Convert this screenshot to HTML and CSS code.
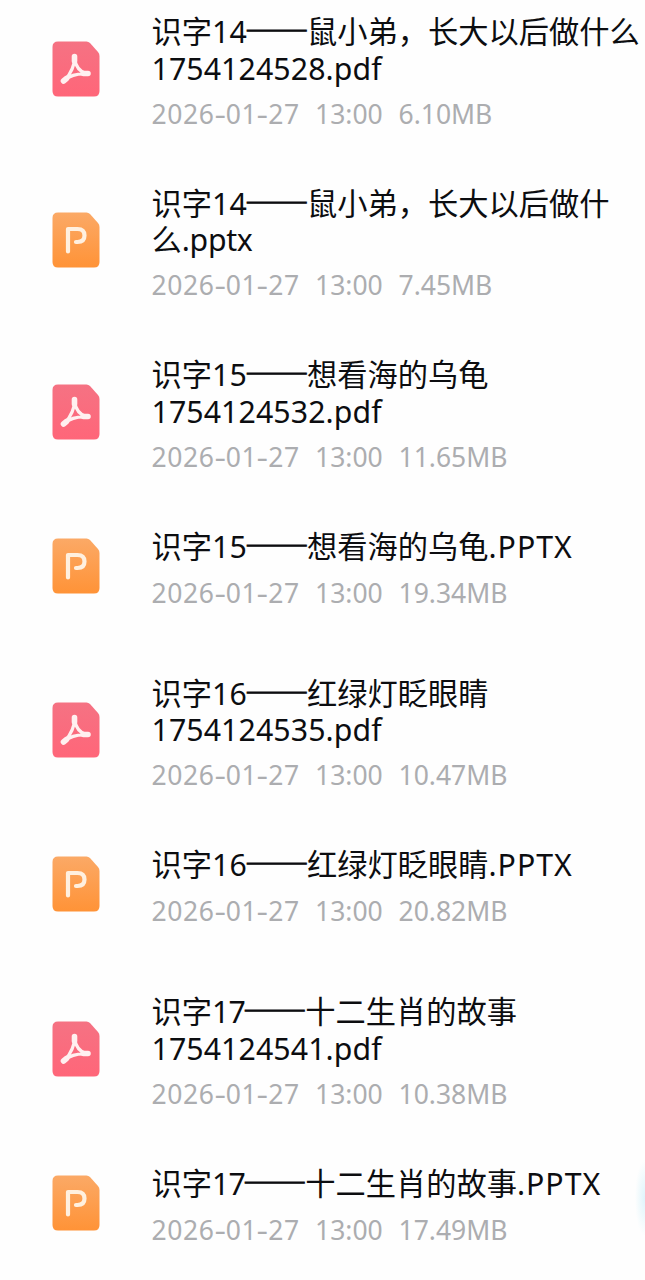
FILE: index.html
```
<!DOCTYPE html>
<html lang="zh-CN">
<head>
<meta charset="utf-8">
<title>文件列表</title>
<link rel="stylesheet" href="styles.css">
</head>
<body>
<svg class="defs" width="0" height="0" aria-hidden="true">
  <defs>
    <linearGradient id="red" x1="0" y1="0" x2="0" y2="1"><stop offset="0" stop-color="#f57283"/><stop offset="1" stop-color="#ff6679"/></linearGradient>
    <linearGradient id="orange" x1="0" y1="0" x2="0" y2="1"><stop offset="0" stop-color="#fba966"/><stop offset="1" stop-color="#ff9337"/></linearGradient>
    <symbol id="pdf" viewBox="0 0 48 56">
      <path fill="url(#red)" d="M6 .5H34.5Q36.5 .5 38 2L46 11Q47.500 12.700 47.500 15V50Q47.500 55.500 42 55.500H6Q.5 55.500 .5 50V6Q.5 .5 6 .5Z"/>
      <path fill="none" stroke="#fff0f0" stroke-width="3.200" stroke-linejoin="round" d="M22.500 17C22.500 24 19 32 13 39C18 34.500 26 32.500 35 33C28 31 23.500 25 22.500 17Z"/>
      <path fill="none" stroke="#fff0f0" stroke-width="5.600" stroke-linecap="round" d="M22.500 15.500V20M11.500 40L14.500 37.500M31.500 32.500H36"/>
    </symbol>
    <symbol id="ppt" viewBox="0 0 48 56">
      <path fill="url(#orange)" d="M6 .5H34.5Q36.500 .5 38 2L46 11Q47.500 12.700 47.500 15V50Q47.500 55.500 42 55.500H6Q.5 55.500 .5 50V6Q.5 .5 6 .5Z"/>
      <path fill="none" stroke="#fff0df" stroke-width="4.200" stroke-linecap="round" stroke-linejoin="round" d="M16 39.500V17H25.500Q32.500 17 32.500 23.500T25.500 30H24"/>
    </symbol>
  </defs>
</svg>
<main class="list">
  <article class="row"><svg class="icon"><use href="#pdf"/></svg><div class="info"><div class="name">识字<span class="num">14</span><span class="dash">——</span>鼠小弟，长大以后做什么<br><span class="num">1754124528.pdf</span></div><div class="meta"><span class="date">2026<i>-</i>01<i>-</i>27</span><span class="time">13:00</span><span>6.10MB</span></div></div></article>
  <article class="row"><svg class="icon"><use href="#ppt"/></svg><div class="info"><div class="name">识字<span class="num">14</span><span class="dash">——</span>鼠小弟，长大以后做什<br>么<span class="num ext">.pptx</span></div><div class="meta"><span class="date">2026<i>-</i>01<i>-</i>27</span><span class="time">13:00</span><span>7.45MB</span></div></div></article>
  <article class="row"><svg class="icon"><use href="#pdf"/></svg><div class="info"><div class="name">识字<span class="num">15</span><span class="dash">——</span>想看海的乌龟<br><span class="num">1754124532.pdf</span></div><div class="meta"><span class="date">2026<i>-</i>01<i>-</i>27</span><span class="time">13:00</span><span>11.65MB</span></div></div></article>
  <article class="row single"><svg class="icon"><use href="#ppt"/></svg><div class="info"><div class="name">识字<span class="num">15</span><span class="dash">——</span>想看海的乌龟<span class="num caps">.PPTX</span></div><div class="meta"><span class="date">2026<i>-</i>01<i>-</i>27</span><span class="time">13:00</span><span>19.34MB</span></div></div></article>
  <article class="row"><svg class="icon"><use href="#pdf"/></svg><div class="info"><div class="name">识字<span class="num">16</span><span class="dash">——</span>红绿灯眨眼睛<br><span class="num">1754124535.pdf</span></div><div class="meta"><span class="date">2026<i>-</i>01<i>-</i>27</span><span class="time">13:00</span><span>10.47MB</span></div></div></article>
  <article class="row single"><svg class="icon"><use href="#ppt"/></svg><div class="info"><div class="name">识字<span class="num">16</span><span class="dash">——</span>红绿灯眨眼睛<span class="num caps">.PPTX</span></div><div class="meta"><span class="date">2026<i>-</i>01<i>-</i>27</span><span class="time">13:00</span><span>20.82MB</span></div></div></article>
  <article class="row"><svg class="icon"><use href="#pdf"/></svg><div class="info"><div class="name">识字<span class="num tight">17</span><span class="dash">——</span>十二生肖的故事<br><span class="num">1754124541.pdf</span></div><div class="meta"><span class="date">2026<i>-</i>01<i>-</i>27</span><span class="time">13:00</span><span>10.38MB</span></div></div></article>
  <article class="row single"><svg class="icon"><use href="#ppt"/></svg><div class="info"><div class="name">识字<span class="num tight">17</span><span class="dash">——</span>十二生肖的故事<span class="num caps">.PPTX</span></div><div class="meta"><span class="date">2026<i>-</i>01<i>-</i>27</span><span class="time">13:00</span><span>17.49MB</span></div></div></article>
</main>
<div class="glow"></div>
</body>
</html>
```
FILE: styles.css
```
body {
  margin: 0;
  height: 1280px;
  position: relative;
  overflow: hidden;
  background: #fefefe;
  color: #0c0d10;
  font-family: "Noto Sans CJK SC", sans-serif;
}
.defs { display: block; }
.list { display: flex; flex-direction: column; }
.row {
  display: flex;
  align-items: center;
  flex: none;
  gap: 52px;
  padding: 31px 0 31px 51.5px;
}
.row:first-child { padding-top: 14px; }
.single { padding-bottom: 42px; }
.icon { width: 48px; height: 56px; flex: none; }
.info { flex: none; }
.name {
  margin-top: -2px;
  font-size: 30.25px;
  line-height: 36.5px;
  white-space: nowrap;
}
.num { font-family: "Noto Sans", sans-serif; line-height: 0; letter-spacing: 0.1px; }
.caps { letter-spacing: 1px; }
.ext { letter-spacing: -0.3px; }
.tight { letter-spacing: -0.8px; }
.dash {
  margin: 0 -1.7px 0 -2.2px;
  font-size: 32px;
  line-height: 0;
  -webkit-text-stroke: 0.9px #0c0d10;
}
.meta {
  display: flex;
  margin-top: 19.5px;
  font: 26.5px/19px "Noto Sans", sans-serif;
  color: #acadb0;
  white-space: nowrap;
}
.single .meta { margin-top: 20.5px; }
.meta i { display: inline-block; padding: 0 1px; font-style: normal; transform: scaleX(1.35); }
.date { width: 163.5px; letter-spacing: 0.6px; }
.time { width: 83.5px; }
.glow {
  position: absolute;
  right: 0;
  top: 1160px;
  width: 10px;
  height: 76px;
  background: radial-gradient(ellipse 10px 38px at right center, #dff4fc, #eef9fc 50%, #fefefe00);
}
```
